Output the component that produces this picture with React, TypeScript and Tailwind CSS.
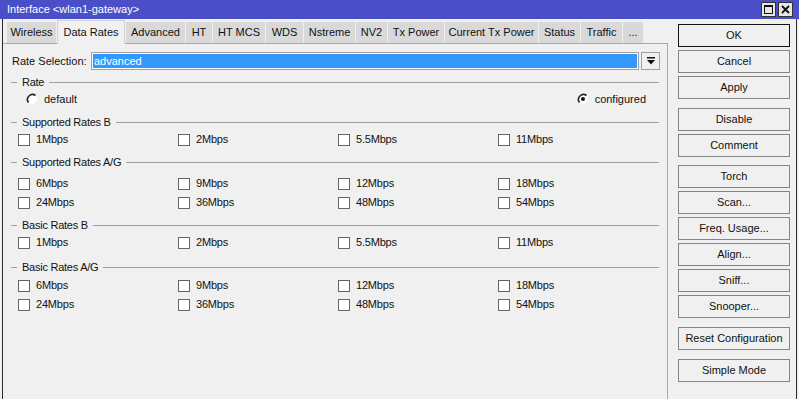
import React from 'react';

const tabs: { label: string; w: string; active?: boolean }[] = [
  { label: 'Wireless', w: 'w-[49px]' },
  { label: 'Data Rates', w: 'w-[68px]', active: true },
  { label: 'Advanced', w: 'w-[59px]' },
  { label: 'HT', w: 'w-[26px]' },
  { label: 'HT MCS', w: 'w-[52px]' },
  { label: 'WDS', w: 'w-[37px]' },
  { label: 'Nstreme', w: 'w-[51px]' },
  { label: 'NV2', w: 'w-[31px]' },
  { label: 'Tx Power', w: 'w-[56px]' },
  { label: 'Current Tx Power', w: 'w-[93px]' },
  { label: 'Status', w: 'w-[41px]' },
  { label: 'Traffic', w: 'w-[41px]' },
  { label: '...', w: 'w-[20px]' },
];

const rowB = ['1Mbps', '2Mbps', '5.5Mbps', '11Mbps'];
const rowAG1 = ['6Mbps', '9Mbps', '12Mbps', '18Mbps'];
const rowAG2 = ['24Mbps', '36Mbps', '48Mbps', '54Mbps'];

const GroupHeader = ({ title, className = '' }: { title: string; className?: string }) => (
  <div className={`h-[16px] flex items-center pl-[8px] pr-[8px] ${className}`}>
    <div className="w-[6px] h-px bg-[#a0a0a0]" />
    <span className="px-[5px] leading-none tracking-[-0.25px]">{title}</span>
    <div className="flex-1 h-px bg-[#a0a0a0]" />
  </div>
);

const CheckRow = ({ items, className = '' }: { items: string[]; className?: string }) => (
  <div className={`h-[19px] flex items-center pl-[15px] ${className}`}>
    {items.map((it) => (
      <div key={it} className="w-[160px] flex items-center gap-[6px]">
        <div className="w-[12px] h-[12px] bg-white border border-[#666]" />
        <span className="leading-none tracking-[-0.2px]">{it}</span>
      </div>
    ))}
  </div>
);

const Radio = ({ checked }: { checked?: boolean }) => (
  <svg width="12" height="12" viewBox="0 0 12 12">
    <circle cx="6" cy="6" r="5" fill="#fff" />
    <path d="M9.5 2.5 A5 5 0 0 0 2.5 9.5" fill="none" stroke="#222" strokeWidth="1.6" />
    {checked && <circle cx="6" cy="6" r="2" fill="#111" />}
  </svg>
);

const Btn = ({ label, className = '', primary }: { label: string; className?: string; primary?: boolean }) => (
  <div
    className={`w-[112px] h-[23px] flex items-center justify-center bg-[#f0f0f0] border ${
      primary ? 'border-[#111]' : 'border-[#858585]'
    } ${className}`}
  >
    {label}
  </div>
);

export default function App() {
  return (
    <div className="w-[799px] h-[399px] overflow-hidden bg-[#f0f0f0] flex flex-col text-[11px] text-[#111] font-['Liberation_Sans',Arial,sans-serif]">
      {/* title bar */}
      <div className="h-[19px] bg-[#4b4fc7] flex items-center justify-between pl-[7px] pr-[6px]">
        <span className="text-white text-[11px] leading-none">Interface &lt;wlan1-gateway&gt;</span>
        <div className="flex gap-[2px]">
          <div className="w-[15px] h-[15px] bg-[#e6e6e6] border border-[#333] flex items-center justify-center">
            <div className="w-[9px] h-[9px] border border-[#111] border-t-2" />
          </div>
          <div className="w-[15px] h-[15px] bg-[#e6e6e6] border border-[#333] flex items-center justify-center">
            <svg width="9" height="9" viewBox="0 0 9 9">
              <path d="M1 1 L8 8 M8 1 L1 8" stroke="#111" strokeWidth="1.8" />
            </svg>
          </div>
        </div>
      </div>

      <div className="flex-1 flex ml-[2px] mr-[2px] border-l border-r border-[#2b2b2b]">
        {/* left side */}
        <div className="w-[665px] flex flex-col">
          <div className="h-[24px] flex items-end gap-[1px] pl-[4px]">
            {tabs.map((t) =>
              t.active ? (
                <div
                  key={t.label}
                  className={`${t.w} h-[24px] -mb-px relative z-10 bg-[#f0f0f0] border-x border-t border-[#d0d0d0] flex items-center justify-center`}
                >
                  {t.label}
                </div>
              ) : (
                <div
                  key={t.label}
                  className={`${t.w} h-[21px] bg-[#d9d9d9] flex items-center justify-center whitespace-nowrap`}
                >
                  {t.label}
                </div>
              )
            )}
          </div>

          <div className="flex-1 border-t border-r border-[#a8a8a8] flex flex-col">
            {/* rate selection */}
            <div className="mt-[8px] h-[18px] flex items-center pl-[9px]">
              <span className="w-[79px] leading-none">Rate Selection:</span>
              <div className="w-[548px] h-[18px] border border-[#a0a0a0] bg-white p-px">
                <div className="h-full bg-[#3399ff] text-white flex items-center pl-px leading-none">advanced</div>
              </div>
              <div className="ml-[2px] w-[19px] h-[18px] border border-[#a0a0a0] bg-[#f0f0f0] flex items-center justify-center">
                <svg width="8" height="8" viewBox="0 0 8 8">
                  <rect x="0" y="0" width="8" height="1.5" fill="#111" />
                  <path d="M0 3 H8 L4 7.5 Z" fill="#111" />
                </svg>
              </div>
            </div>

            <GroupHeader title="Rate" className="mt-[4px]" />
            <div className="h-[18px] flex items-center justify-between pl-[23px] pr-[21px]">
              <div className="flex items-center gap-[6px]">
                <Radio />
                <span className="leading-none">default</span>
              </div>
              <div className="flex items-center gap-[6px]">
                <Radio checked />
                <span className="leading-none">configured</span>
              </div>
            </div>

            <GroupHeader title="Supported Rates B" className="mt-[6px]" />
            <CheckRow items={rowB} />

            <GroupHeader title="Supported Rates A/G" className="mt-[5px]" />
            <CheckRow items={rowAG1} className="mt-[4px]" />
            <CheckRow items={rowAG2} />

            <GroupHeader title="Basic Rates B" className="mt-[5px]" />
            <CheckRow items={rowB} />

            <GroupHeader title="Basic Rates A/G" className="mt-[7px]" />
            <CheckRow items={rowAG1} className="mt-px" />
            <CheckRow items={rowAG2} />
          </div>
        </div>

        {/* right buttons */}
        <div className="flex-1 flex flex-col gap-[3px] pl-[10px] pt-[5px]">
          <Btn label="OK" primary />
          <Btn label="Cancel" />
          <Btn label="Apply" />
          <Btn label="Disable" className="mt-[6px]" />
          <Btn label="Comment" />
          <Btn label="Torch" className="mt-[5px]" />
          <Btn label="Scan..." />
          <Btn label="Freq. Usage..." />
          <Btn label="Align..." />
          <Btn label="Sniff..." />
          <Btn label="Snooper..." />
          <Btn label="Reset Configuration" className="mt-[6px]" />
          <Btn label="Simple Mode" className="mt-[6px]" />
        </div>
      </div>
    </div>
  );
}
